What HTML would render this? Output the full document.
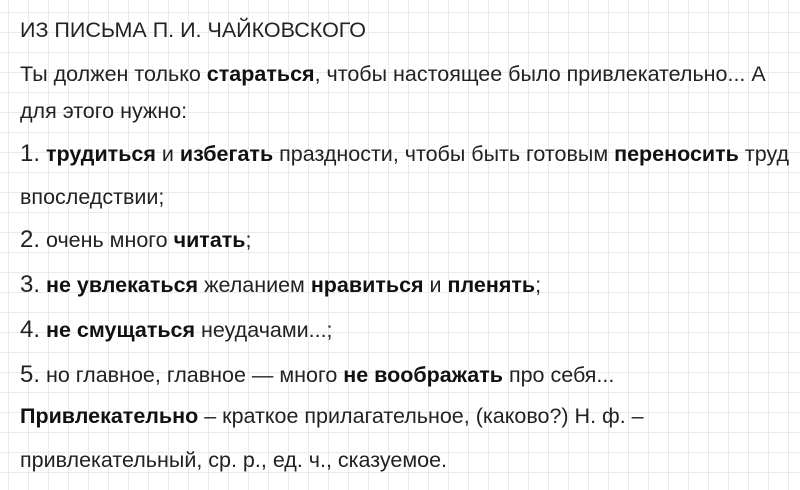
<!DOCTYPE html>
<html><head><meta charset="utf-8"><style>
body{margin:0;width:800px;height:490px;overflow:hidden;background:#fff;
background-image:linear-gradient(to right,#e4eaf6 1px,transparent 1px),linear-gradient(to bottom,#e4eaf6 1px,transparent 1px);
background-size:20px 20px;background-position:8px 12px;font-family:"Liberation Sans",sans-serif;color:#222;}
.l{position:absolute;left:20px;font-size:21.5px;white-space:nowrap;line-height:24px;}
b{font-weight:bold;color:#111}
.n{font-size:24px;font-weight:300}
</style></head><body>
<div class="l" style="top:18px">ИЗ ПИСЬМА П. И. ЧАЙКОВСКОГО</div>
<div class="l" style="top:62px">Ты должен только <b>стараться</b>, чтобы настоящее было привлекательно... А</div>
<div class="l" style="top:99px">для этого нужно:</div>
<div class="l" style="top:142px"><span class="n">1.</span> <b>трудиться</b> и <b>избегать</b> праздности, чтобы быть готовым <b>переносить</b> труд</div>
<div class="l" style="top:185px">впоследствии;</div>
<div class="l" style="top:228px"><span class="n">2.</span> очень много <b>читать</b>;</div>
<div class="l" style="top:273px"><span class="n">3.</span> <b>не увлекаться</b> желанием <b>нравиться</b> и <b>пленять</b>;</div>
<div class="l" style="top:318px"><span class="n">4.</span> <b>не смущаться</b> неудачами...;</div>
<div class="l" style="top:363px"><span class="n">5.</span> но главное, главное — много <b>не воображать</b> про себя...</div>
<div class="l" style="top:404px"><b>Привлекательно</b> – краткое прилагательное, (каково?) Н. ф. –</div>
<div class="l" style="top:448px">привлекательный, ср. р., ед. ч., сказуемое.</div>
</body></html>
